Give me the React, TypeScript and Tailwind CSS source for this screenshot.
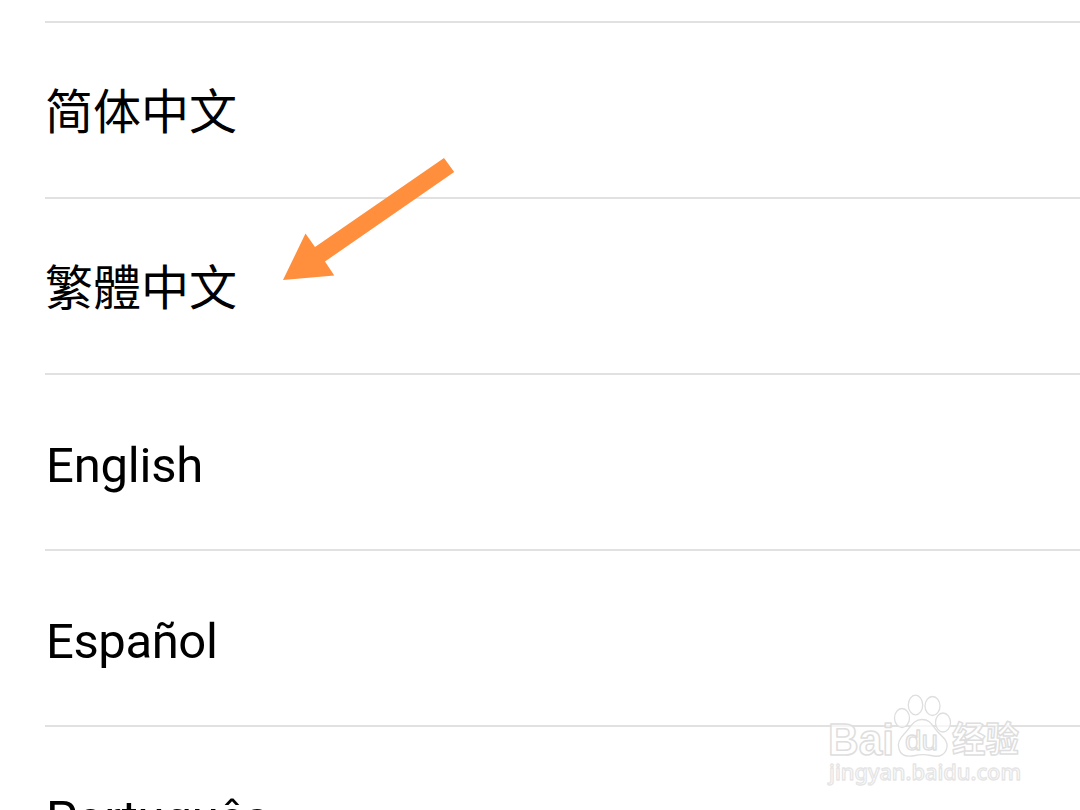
import React from "react";

interface Language {
  code: string;
  label: string;
  className: string;
}

const LANGUAGES: Language[] = [
  { code: "zh-CN", label: "简体中文", className: "font-['Noto_Sans_CJK_SC',sans-serif] text-[48px] pb-1" },
  { code: "zh-TW", label: "繁體中文", className: "font-['Noto_Sans_CJK_SC',sans-serif] text-[48px] pb-1" },
  { code: "en", label: "English", className: "font-[Roboto,sans-serif] text-[49px] pl-px pt-1.5 tracking-[-0.2px]" },
  { code: "es", label: "Español", className: "font-[Roboto,sans-serif] text-[49px] pl-px pt-1.5 tracking-[-0.4px]" },
  { code: "pt", label: "Português", className: "font-[Roboto,sans-serif] text-[49px] pl-px pt-2 tracking-[-0.2px]" },
];

const LanguageRow: React.FC<{ language: Language }> = ({ language }) => (
  <li className="flex h-44 shrink-0 items-center border-t-2 border-[#e1e1e1]">
    <span lang={language.code} className={`leading-none whitespace-nowrap ${language.className}`}>
      {language.label}
    </span>
  </li>
);

// Arrow pointing at the Traditional Chinese row
const PointerArrow: React.FC = () => (
  <svg className="absolute left-[280px] top-[155px]" width="178" height="128" viewBox="280 155 178 128">
    <path d="M283 280L305.5 233.5L315 247L444 158L454.2 172L325 261.5L334.3 275.5Z" fill="#ff8f3c" />
  </svg>
);

const Watermark: React.FC = () => (
  <svg
    className="absolute left-[820px] top-[685px]"
    width="210"
    height="110"
    viewBox="820 685 210 110"
    fill="#ffffff"
    fillOpacity="0.7"
    stroke="#dedede"
    strokeWidth="1.3"
    strokeLinejoin="round"
    fontFamily="'Liberation Sans', 'Noto Sans CJK SC', sans-serif"
    fontWeight="700"
  >
    <text x="828" y="755" fontSize="45" strokeWidth="1.6" textLength="66" lengthAdjust="spacingAndGlyphs">
      Bai
    </text>
    <ellipse cx="902" cy="718" rx="7.5" ry="9.5" />
    <ellipse cx="915.5" cy="705" rx="7.2" ry="9.8" />
    <ellipse cx="932.5" cy="706" rx="7.5" ry="9.5" />
    <ellipse cx="943" cy="722.5" rx="7.5" ry="9.5" />
    <path d="M922 719.5C913 719.5 911 727 905 733C899 739 897 744 899 749C901 756 908 757 915 755.5C921 754 926 754.5 931 755.5C940 758 946 754 947 747C948 740 942 737 937 731C932 725 930 719.5 922 719.5Z" />
    <text x="905" y="750" fontSize="27" fontWeight="400" textLength="33" lengthAdjust="spacingAndGlyphs">
      du
    </text>
    <text x="952" y="752" fontSize="35" strokeWidth="1.5" fontFamily="'Noto Sans CJK SC', sans-serif" textLength="67" lengthAdjust="spacingAndGlyphs">
      经验
    </text>
    <text x="829" y="780" fontSize="22" fontFamily="'Noto Sans', sans-serif" fontWeight="500" stroke="#e5e5e5" textLength="192" lengthAdjust="spacingAndGlyphs">
      jingyan.baidu.com
    </text>
  </svg>
);

export default function App() {
  return (
    <main className="relative h-[810px] w-[1080px] overflow-hidden bg-white text-black">
      <ul className="flex flex-col pl-[45px] pt-[21px]">
        {LANGUAGES.map((language) => (
          <LanguageRow key={language.code} language={language} />
        ))}
      </ul>
      <PointerArrow />
      <Watermark />
    </main>
  );
}
